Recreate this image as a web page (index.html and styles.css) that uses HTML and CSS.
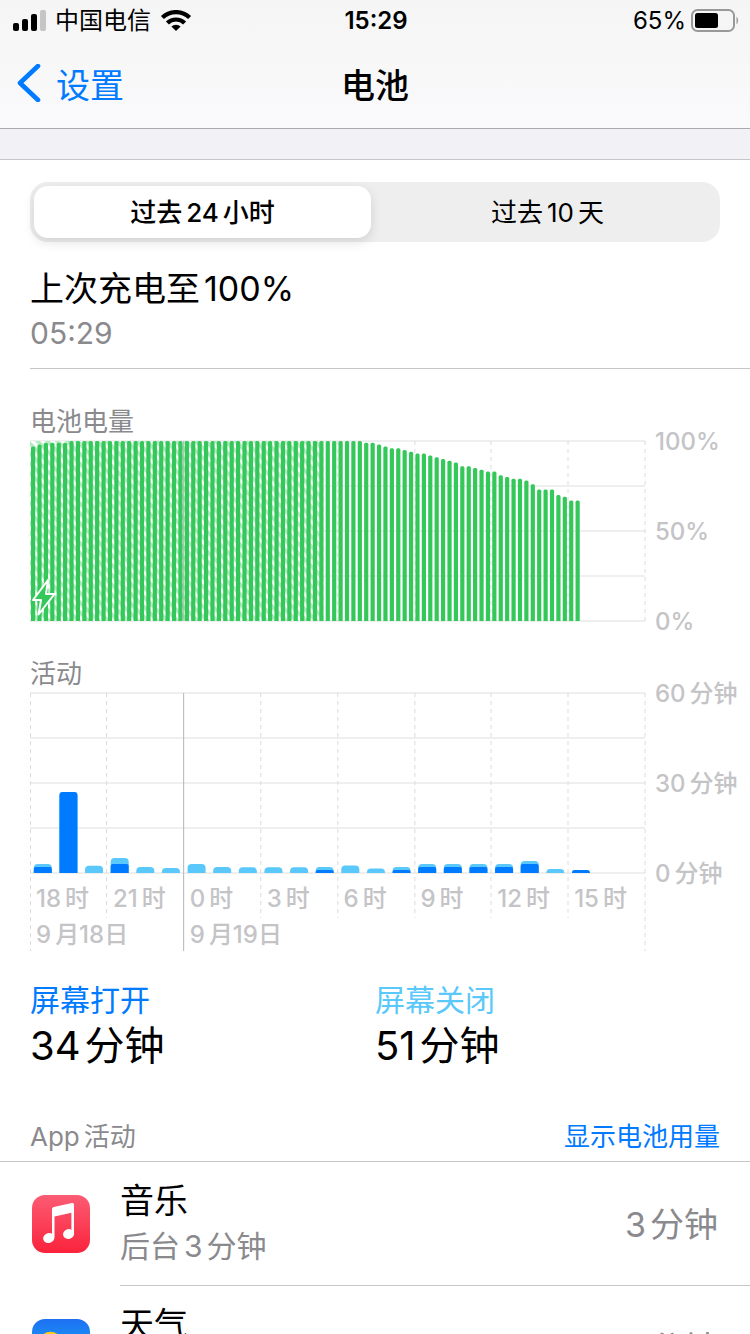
FILE: index.html
```html
<!DOCTYPE html>
<html lang="zh-CN">
<head>
    <meta charset="UTF-8">
    <meta name="viewport" content="width=device-width">
    <title>电池</title>
    <link rel="stylesheet" href="styles.css">
</head>
<body>
    <header class="top">
        <div class="status">
            <div class="status-left">
                <svg class="signal" width="34" height="22" viewBox="0 0 34 22">
                    <rect x="0" y="13" width="6" height="8" rx="2"/>
                    <rect x="9" y="9" width="6" height="12" rx="2"/>
                    <rect x="18" y="4" width="6" height="17" rx="2"/>
                    <rect x="27" y="0" width="6" height="21" rx="2" fill="#c5c5c5"/>
                </svg>
                <span>中国电信</span>
                <svg class="wifi" width="34" height="22" viewBox="0 0 34 22">
                    <path d="M3.400 7.600a19.500 19.500 0 0 1 27.200 0" fill="none" stroke="#000" stroke-width="4.200"/>
                    <path d="M8.400 13a12.300 12.300 0 0 1 17.200 0" fill="none" stroke="#000" stroke-width="4.200"/>
                    <path d="M12.400 16.600a6.600 6.600 0 0 1 9.200 0L17 21z"/>
                </svg>
            </div>
            <time class="clock">15:29</time>
            <div class="status-right">
                <span>65%</span>
                <svg width="48" height="24" viewBox="0 0 48 24">
                    <rect x="1" y="1" width="42" height="21" rx="5.5" fill="none" stroke="#999" stroke-width="2"/>
                    <rect x="4" y="4" width="23" height="15" rx="2.5"/>
                    <path d="M45.5 7.500q3.200 4 0 8z" fill="#999"/>
                </svg>
            </div>
        </div>
        <nav class="nav">
            <a class="back" href="#">
                <svg width="24" height="38" viewBox="0 0 24 38">
                    <path d="M21 2L3 19l18 17" fill="none" stroke="#007aff" stroke-width="4.6" stroke-linecap="round" stroke-linejoin="round"/>
                </svg>
                设置
            </a>
            <h1>电池</h1>
        </nav>
    </header>

    <main>
        <div class="band"></div>
        <div class="segment">
            <button type="button" class="active">过去<span class="num">24</span>小时</button>
            <button type="button">过去<span class="num">10</span>天</button>
        </div>

        <section class="charge">
            <h2>上次充电至<span class="num">100%</span></h2>
            <p>05:29</p>
        </section>

        <section class="chart">
            <h3>电池电量</h3>
            <div class="chart-row">
                <svg id="level" class="plot" viewBox="0 0 614.4 180" preserveAspectRatio="none">
                    <defs>
                        <pattern id="hatch" width="7" height="7" patternUnits="userSpaceOnUse" patternTransform="rotate(45)">
                            <rect width="7" height="7" fill="#fff"/>
                            <rect width="7" height="3.800" fill="#b4ebc3"/>
                        </pattern>
                    </defs>
                </svg>
                <div class="axis"><span>100%</span><span>50%</span><span>0%</span></div>
            </div>
        </section>

        <section class="chart">
            <h3>活动</h3>
            <div class="chart-row">
                <svg id="activity" class="plot" viewBox="0 0 614.4 180" preserveAspectRatio="none"></svg>
                <div class="axis">
                    <span>60<i></i>分钟</span><span>30<i></i>分钟</span><span>0<i></i>分钟</span>
                </div>
            </div>
            <div class="hours">
                <span>18<i></i>时</span><span>21<i></i>时</span><span>0<i></i>时</span><span>3<i></i>时</span>
                <span>6<i></i>时</span><span>9<i></i>时</span><span>12<i></i>时</span><span>15<i></i>时</span>
                <span class="day">9<i></i>月18日</span>
                <span class="day">9<i></i>月19日</span>
            </div>
        </section>

        <section class="totals">
            <div>
                <h4 class="on">屏幕打开</h4>
                <p>34<i></i>分钟</p>
            </div>
            <div>
                <h4 class="off">屏幕关闭</h4>
                <p>51<i></i>分钟</p>
            </div>
        </section>

        <div class="list-head">
            <h3>App<i></i>活动</h3>
            <button type="button">显示电池用量</button>
        </div>
        <ul class="apps">
            <li>
                <svg class="icon" width="58" height="58" viewBox="0 0 58 58">
                    <defs>
                        <linearGradient id="red" x2="0" y2="1">
                            <stop offset="0" stop-color="#fb5c74"/>
                            <stop offset="1" stop-color="#fa233b"/>
                        </linearGradient>
                    </defs>
                    <rect width="58" height="58" rx="13" fill="url(#red)"/>
                    <g fill="#fff">
                        <path d="M20 14q0-1.700 1.700-2.100L40 8q2-.4 2 1.500V38h-2.600V17.800L22.500 21.400V42H20z"/>
                        <ellipse cx="36.600" cy="39" rx="5.600" ry="4.900" transform="rotate(-15 36.600 39)"/>
                        <ellipse cx="16.800" cy="43" rx="5.700" ry="4.900" transform="rotate(-15 16.800 43)"/>
                    </g>
                </svg>
                <div class="info">
                    <div>
                        <h4>音乐</h4>
                        <p>后台<span class="num">3</span>分钟</p>
                    </div>
                    <span class="time">3<i></i>分钟</span>
                </div>
            </li>
            <li>
                <svg class="icon" width="58" height="58" viewBox="0 0 58 58">
                    <defs>
                        <linearGradient id="sky" x2="0" y2="1">
                            <stop offset="0" stop-color="#1d6ff2"/>
                            <stop offset="1" stop-color="#1ac8fc"/>
                        </linearGradient>
                    </defs>
                    <rect width="58" height="58" rx="13" fill="url(#sky)"/>
                    <circle cx="18.500" cy="24" r="11.300" fill="#fecd13"/>
                    <path fill="#fff" d="M20 45a8 8 0 0 1 0-16 11 11 0 0 1 21-1 8.500 8.500 0 0 1 1 17z"/>
                </svg>
                <div class="info">
                    <div>
                        <h4>天气</h4>
                        <p>后台<span class="num">2</span>分钟</p>
                    </div>
                    <span class="time">2<i></i>分钟</span>
                </div>
            </li>
        </ul>
    </main>
    <script src="script.js"></script>
</body>
</html>
```

FILE: styles.css
```css
* {
    box-sizing: border-box;
    margin: 0;
    padding: 0;
}
body {
    height: 100vh;
    display: flex;
    flex-direction: column;
    font-family: Inter, "Noto Sans CJK SC", sans-serif;
    text-autospace: no-autospace;
    color: #000;
    background: #fff;
}
h1, h2, h3, h4 {
    font-weight: 400;
}
button {
    font-family: inherit;
    border: none;
    background: none;
    cursor: pointer;
}
a {
    text-decoration: none;
}
/* thin gap between digits and hanzi */
i {
    display: inline-block;
    width: 4px;
}
.num {
    margin: 0 4px;
}

/* status bar + nav */
.top {
    background: linear-gradient(#f5f5f5, #fafafc);
    border-bottom: 1px solid #a9a9ae;
}
.status {
    height: 40px;
    display: grid;
    grid-template-columns: 1fr auto 1fr;
    align-items: center;
    padding: 2px 11px 0 13px;
    font-size: 24px;
    line-height: 30px;
}
.status-left, .status-right {
    display: flex;
    align-items: center;
}
.status-left {
    gap: 8px;
}
.status-right {
    justify-content: flex-end;
    gap: 5px;
}
.clock {
    font-weight: 600;
}
.nav {
    height: 88px;
    display: grid;
    grid-template-columns: 1fr auto 1fr;
    align-items: center;
    padding: 0 17px 2px;
    font-size: 34px;
}
.nav h1 {
    font-size: 34px;
    font-weight: 500;
}
.back {
    display: flex;
    align-items: center;
    gap: 15px;
    color: #007aff;
}

main {
    flex: 1;
    overflow-y: auto;
    scrollbar-width: none;
}
.band {
    height: 31px;
    background: #f2f1f6;
    border-bottom: 1px solid #c6c6c8;
}
.segment {
    display: grid;
    grid-template-columns: 1fr 1fr;
    margin: 22px 30px 0;
    height: 60px;
    border-radius: 18px;
    background: #eeeeef;
}
.segment button {
    margin: 4px;
    padding-bottom: 4px;
    border-radius: 14px;
    font-size: 26px;
    font-weight: 400;
}
.segment .active {
    background: #fff;
    font-weight: 500;
    box-shadow: 0 4px 12px rgba(0, 0, 0, .12);
}
.charge {
    margin-left: 30px;
    padding: 23px 0 16px;
    border-bottom: 1px solid #c6c6c8;
}
.charge h2 {
    font-size: 34px;
    line-height: 48px;
}
.charge p {
    font-size: 30px;
    line-height: 38px;
    margin-top: 1px;
    color: #8a8a8e;
}

/* charts */
.chart {
    padding-left: 30px;
}
.chart h3 {
    padding-top: 34px;
    font-size: 26px;
    line-height: 38px;
    color: #8a8a8e;
}
.chart-row {
    display: flex;
    height: 180px;
}
.plot {
    flex: 1;
    min-width: 0;
    height: 180px;
    overflow: visible;
}
.axis {
    width: 105px;
    margin: -14px 0 -16px;
    padding-left: 10px;
    display: flex;
    flex-direction: column;
    justify-content: space-between;
    font-size: 24px;
    font-weight: 500;
    line-height: 30px;
    color: #c4c4c7;
}
.hours {
    display: grid;
    grid-template-columns: repeat(8, 1fr);
    grid-auto-rows: 36px;
    margin-right: 105px;
    padding-top: 8px;
    font-size: 24px;
    font-weight: 500;
    line-height: 36px;
    color: #c4c4c7;
}
.hours span {
    padding-left: 6px;
    white-space: nowrap;
}
.hours .day {
    grid-column: span 2;
}
.grid {
    stroke: #efeff0;
    stroke-width: 2;
}
.tick {
    stroke: #dcdce0;
    stroke-width: 1;
    stroke-dasharray: 4 4;
}
.midnight {
    stroke: #b4b4b7;
    stroke-width: 1;
}
.level-bar {
    fill: #34c759;
}
.screen-off {
    fill: #5ac8fa;
}
.screen-on {
    fill: #007aff;
}
.bolt {
    fill: #34c759;
    stroke: #fff;
    stroke-width: 2;
    stroke-linejoin: round;
}

.totals {
    display: grid;
    grid-template-columns: 1fr 1fr;
    padding: 25px 30px 0;
}
.totals h4 {
    font-size: 30px;
    line-height: 44px;
}
.totals p {
    font-size: 40px;
    line-height: 48px;
}
.on {
    color: #007aff;
}
.off {
    color: #5ac8fa;
}

/* app list */
.list-head {
    display: flex;
    align-items: center;
    justify-content: space-between;
    margin-top: 48px;
    padding: 0 30px 5px;
    border-bottom: 1px solid #c6c6c8;
}
.list-head h3 {
    font-size: 26px;
    line-height: 38px;
    color: #8a8a8e;
}
.list-head button {
    font-size: 26px;
    line-height: 38px;
    color: #007aff;
}
.apps {
    list-style: none;
}
.apps li {
    display: flex;
    align-items: center;
    gap: 30px;
    padding-left: 32px;
}
.icon {
    flex: none;
}
.info {
    flex: 1;
    display: flex;
    align-items: center;
    justify-content: space-between;
    height: 124px;
    padding: 0 32px 2px 0;
    border-bottom: 1px solid #c6c6c8;
}
.info h4 {
    font-size: 34px;
    line-height: 46px;
}
.info p {
    font-size: 30px;
    line-height: 44px;
    color: #8a8a8e;
}
.time {
    font-size: 34px;
    color: #8a8a8e;
}
```

FILE: script.js
```js
const W = 614.4;
const H = 180;

// battery level, one value per 15 minutes
const level = [97, 98, 99, 99, 99, 99]
    .concat(Array(46).fill(100))
    .concat([99, 99, 98, 97, 96, 96, 95, 94, 93, 93, 92, 91, 90, 89, 88, 86, 86, 85, 84, 83, 83,
        81, 80, 79, 79, 78, 76, 73, 73, 73, 70, 69, 67, 67]);
const chargingSlots = 46;

// minutes per hour: [total, screen on]
const activity = [[3, 2], [27, 27], [2.4, 0], [5, 3], [2, 0], [1.7, 0], [3, 0], [2, 0],
    [1.9, 0], [1.9, 0], [1.9, 0], [2, 1], [2.5, 0], [1.5, 0], [2, 1], [3, 2], [3, 2],
    [3, 2], [3, 2], [4, 3], [1.3, 0], [1, 1]];

function add(svg, tag, attrs) {
    const el = document.createElementNS('http://www.w3.org/2000/svg', tag);
    for (const key in attrs) {
        el.setAttribute(key, attrs[key]);
    }
    svg.appendChild(el);
}

function line(svg, cls, x1, y1, x2, y2) {
    add(svg, 'line', { class: cls, x1, y1, x2, y2 });
}

function drawGrid(svg, hourEnd, dayEnd) {
    for (let i = 0; i <= 4; i++) {
        line(svg, 'grid', 0, i * H / 4, W, i * H / 4);
    }
    for (let i = 0; i <= 8; i++) {
        const x = Math.floor(i * W / 8) + 0.5;
        const end = i === 0 || i === 2 || i === 8 ? dayEnd : hourEnd;
        line(svg, i === 2 ? 'midnight' : 'tick', x, 0, x, end);
    }
}

// bar with only the top corners rounded
function bar(svg, cls, x, w, h, r) {
    r = Math.min(r, h);
    add(svg, 'path', {
        class: cls,
        d: `M${x} ${H}V${H - h + r}q0 ${-r} ${r} ${-r}h${w - 2 * r}q${r} 0 ${r} ${r}V${H}z`
    });
}

const levelSvg = document.getElementById('level');
const slot = W / 96;
drawGrid(levelSvg, H, H);
add(levelSvg, 'rect', { x: 0, y: 0, width: chargingSlots * slot - 1, height: H, fill: 'url(#hatch)' });
line(levelSvg, 'midnight', 153.5, 0, 153.5, H);
level.forEach((v, i) => bar(levelSvg, 'level-bar', i * slot + 1, 4.2, v * H / 100, 1.5));
add(levelSvg, 'path', { class: 'bolt', d: 'M18 139L3 159h8l-2.500 14.500L24.500 153h-8.500z' });

const activitySvg = document.getElementById('activity');
const hour = W / 24;
drawGrid(activitySvg, 225, 258);
activity.forEach(([total, on], i) => {
    bar(activitySvg, 'screen-off', i * hour + 3.8, 18, total * 3, 4);
    if (on) {
        bar(activitySvg, 'screen-on', i * hour + 3.8, 18, on * 3, on === total ? 3 : 2);
    }
});
```
